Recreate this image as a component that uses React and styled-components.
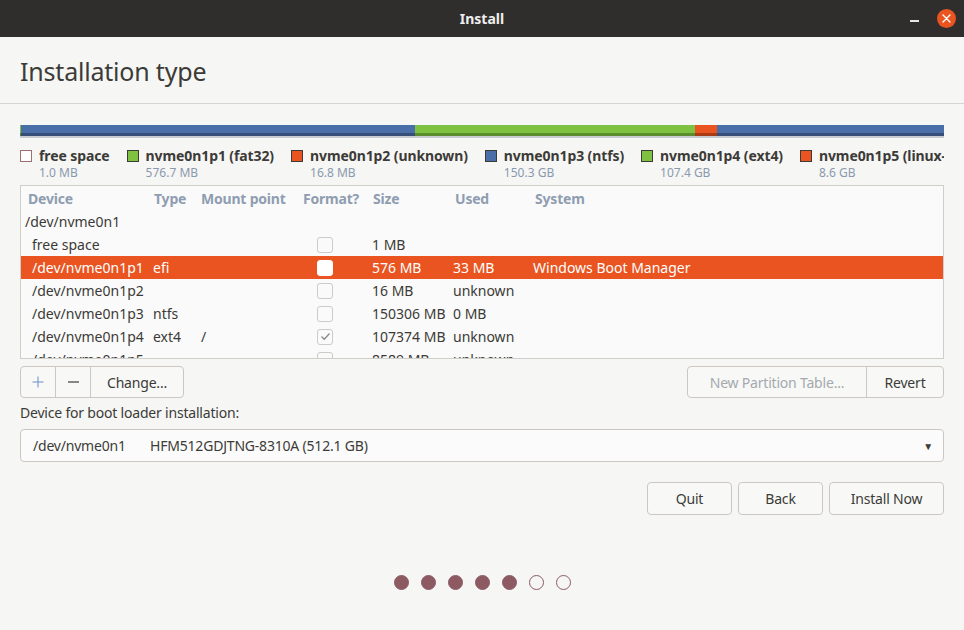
import React from "react";
import styled, { createGlobalStyle } from "styled-components";

const GlobalStyle = createGlobalStyle`
  html, body { margin: 0; padding: 0; }
  body {
    background: #f6f6f5;
    font-family: "Noto Sans", "Open Sans", sans-serif;
    color: #3c3b37;
  }
  * { box-sizing: border-box; }
`;

const Window = styled.div`
  width: 964px;
  height: 630px;
  display: flex;
  flex-direction: column;
  background: #f6f6f5;
  overflow: hidden;
`;

const TitleBar = styled.div`
  height: 37px;
  flex: none;
  background: #302e2c;
  display: grid;
  grid-template-columns: 1fr auto 1fr;
  align-items: center;
`;

const TitleText = styled.div`
  grid-column: 2;
  color: #efefef;
  font-weight: 700;
  font-size: 14px;
`;

const Controls = styled.div`
  grid-column: 3;
  justify-self: end;
  display: flex;
  align-items: center;
  gap: 18px;
  padding-right: 8px;
`;

const MinBtn = styled.div`
  width: 9px;
  height: 2px;
  background: #e6e6e6;
  margin-top: 4px;
`;

const CloseBtn = styled.div`
  width: 19px;
  height: 19px;
  border-radius: 50%;
  background: #e95420;
  display: flex;
  align-items: center;
  justify-content: center;
`;

const Header = styled.div`
  flex: none;
  height: 67px;
  border-bottom: 1px solid #d6d5d3;
  padding: 18px 20px 0;
`;

const Title = styled.h1`
  margin: 0;
  font-size: 25px;
  font-weight: 400;
  line-height: 32px;
  color: #3c3b37;
  letter-spacing: -0.2px;
`;

const Body = styled.div`
  padding: 21px 20px 0;
  display: flex;
  flex-direction: column;
`;

const Bar = styled.div`
  height: 13px;
  display: flex;
  border-bottom: 2px solid #c9ccd0;
`;

const Seg = styled.div`
  height: 100%;
  background: ${(p) => p.$c};
  box-shadow: inset 0 -3px 0 rgba(0, 0, 0, 0.28);
`;

const Legend = styled.div`
  margin-top: 9px;
  display: flex;
  gap: 17px;
  overflow: hidden;
  white-space: nowrap;
  height: 36px;
`;

const LegendItem = styled.div`
  display: flex;
  gap: 7px;
  flex: none;
`;

const Swatch = styled.div`
  width: 12px;
  height: 12px;
  margin-top: 3px;
  background: ${(p) => p.$c};
  border: 1px solid ${(p) => p.$b};
`;

const LegendText = styled.div`
  display: flex;
  flex-direction: column;
`;

const LegendName = styled.span`
  font-size: 14px;
  font-weight: 700;
  line-height: 18px;
  color: #3c3b37;
  letter-spacing: -0.1px;
`;

const LegendSize = styled.span`
  font-size: 12px;
  line-height: 15px;
  color: #8a99ad;
`;

const Table = styled.div`
  margin-top: 2px;
  height: 174px;
  border: 1px solid #cfceca;
  background: #fafafa;
  overflow: hidden;
`;

const cols = "126px 47px 102px 70px 82px 80px 1fr";

const HeadRow = styled.div`
  display: grid;
  grid-template-columns: ${cols};
  height: 24px;
  align-items: center;
  padding-left: 7px;
  font-size: 14px;
  font-weight: 700;
  color: #8f9db1;
  letter-spacing: -0.2px;
`;

const Row = styled.div`
  display: grid;
  grid-template-columns: ${cols};
  height: 23px;
  align-items: center;
  padding-left: 7px;
  font-size: 14px;
  background: ${(p) => (p.$sel ? "#e95420" : "transparent")};
  color: ${(p) => (p.$sel ? "#ffffff" : "#3c3b37")};
  white-space: nowrap;
`;

const Cell = styled.div`
  padding-left: ${(p) => p.$pl || 0}px;
  margin-left: ${(p) => p.$ml || 0}px;
`;

const CheckCell = styled.div`
  display: flex;
  padding-left: 14px;
`;

const Check = styled.div`
  width: 16px;
  height: 16px;
  border-radius: 3px;
  border: 1px solid ${(p) => (p.$sel ? "#ffffff" : "#cdcbc8")};
  background: ${(p) => (p.$sel ? "#ffffff" : "#fafafa")};
  display: flex;
  align-items: center;
  justify-content: center;
`;

const ButtonRow = styled.div`
  margin-top: 7px;
  display: flex;
  justify-content: space-between;
`;

const Group = styled.div`
  display: flex;
  border: 1px solid #cdc7c2;
  border-radius: 4px;
  background: #f8f8f7;
  height: 32px;
`;

const GroupBtn = styled.div`
  width: ${(p) => p.$w}px;
  display: flex;
  align-items: center;
  justify-content: center;
  font-size: 14px;
  color: ${(p) => (p.$dis ? "#a5a9ae" : "#3c3b37")};
  border-left: ${(p) => (p.$first ? "none" : "1px solid #cdc7c2")};
  letter-spacing: -0.2px;
`;

const Label = styled.div`
  margin-top: 6px;
  font-size: 14px;
  line-height: 18px;
  color: #3c3b37;
  letter-spacing: -0.2px;
`;

const Combo = styled.div`
  margin-top: 7px;
  height: 33px;
  border: 1px solid #cdc7c2;
  border-radius: 4px;
  background: #fbfbfb;
  display: flex;
  align-items: center;
  padding: 0 10px 0 12px;
  font-size: 14px;
  letter-spacing: -0.2px;
`;

const ComboDev = styled.span`
  width: 117px;
  flex: none;
`;

const ComboName = styled.span`
  flex: 1;
`;

const Arrow = styled.span`
  font-size: 10px;
  color: #3c3b37;
`;

const Actions = styled.div`
  margin-top: 20px;
  display: flex;
  justify-content: flex-end;
  gap: 6px;
`;

const ActionBtn = styled.div`
  width: ${(p) => p.$w}px;
  height: 33px;
  border: 1px solid #cdc7c2;
  border-radius: 4px;
  background: #f8f8f7;
  display: flex;
  align-items: center;
  justify-content: center;
  font-size: 14px;
  color: #3c3b37;
  letter-spacing: -0.2px;
`;

const Dots = styled.div`
  margin-top: 60px;
  display: flex;
  justify-content: center;
  gap: 12px;
  padding-left: 1px;
`;

const Dot = styled.div`
  width: 15px;
  height: 15px;
  border-radius: 50%;
  background: ${(p) => (p.$on ? "#8c5a60" : "transparent")};
  border: 1.5px solid #8c5a6a;
`;

const legend = [
  { name: "free space", size: "1.0 MB", c: "#ffffff", b: "#a07070" },
  { name: "nvme0n1p1 (fat32)", size: "576.7 MB", c: "#7fc241", b: "#3c3b37" },
  { name: "nvme0n1p2 (unknown)", size: "16.8 MB", c: "#e95420", b: "#3c3b37" },
  { name: "nvme0n1p3 (ntfs)", size: "150.3 GB", c: "#4a6ea8", b: "#3c3b37" },
  { name: "nvme0n1p4 (ext4)", size: "107.4 GB", c: "#7fc241", b: "#3c3b37" },
  { name: "nvme0n1p5 (linux-swap)", size: "8.6 GB", c: "#e95420", b: "#3c3b37" },
];

const rows = [
  { dev: "free space", type: "", mount: "", check: false, size: "1 MB", used: "", sys: "" },
  { dev: "/dev/nvme0n1p1", type: "efi", mount: "", check: false, size: "576 MB", used: "33 MB", sys: "Windows Boot Manager", sel: true },
  { dev: "/dev/nvme0n1p2", type: "", mount: "", check: false, size: "16 MB", used: "unknown", sys: "" },
  { dev: "/dev/nvme0n1p3", type: "ntfs", mount: "", check: false, size: "150306 MB", used: "0 MB", sys: "" },
  { dev: "/dev/nvme0n1p4", type: "ext4", mount: "/", check: true, size: "107374 MB", used: "unknown", sys: "" },
  { dev: "/dev/nvme0n1p5", type: "", mount: "", check: false, size: "8589 MB", used: "unknown", sys: "" },
];

export default function App() {
  return (
    <>
      <GlobalStyle />
      <Window>
        <TitleBar>
          <TitleText>Install</TitleText>
          <Controls>
            <MinBtn />
            <CloseBtn>
              <svg width="9" height="9" viewBox="0 0 9 9">
                <path d="M1 1L8 8M8 1L1 8" stroke="#fff" strokeWidth="1.4" strokeLinecap="round" />
              </svg>
            </CloseBtn>
          </Controls>
        </TitleBar>
        <Header>
          <Title>Installation type</Title>
        </Header>
        <Body>
          <Bar>
            <Seg $c="#7fc241" style={{ width: 1 }} />
            <Seg $c="#4a6ea8" style={{ width: 394 }} />
            <Seg $c="#7fc241" style={{ width: 280 }} />
            <Seg $c="#e95420" style={{ width: 22 }} />
            <Seg $c="#4a6ea8" style={{ flex: 1 }} />
          </Bar>
          <Legend>
            {legend.map((l) => (
              <LegendItem key={l.name}>
                <Swatch $c={l.c} $b={l.b} />
                <LegendText>
                  <LegendName>{l.name}</LegendName>
                  <LegendSize>{l.size}</LegendSize>
                </LegendText>
              </LegendItem>
            ))}
          </Legend>
          <Table>
            <HeadRow>
              <Cell>Device</Cell>
              <Cell>Type</Cell>
              <Cell>Mount point</Cell>
              <Cell>Format?</Cell>
              <Cell>Size</Cell>
              <Cell>Used</Cell>
              <Cell>System</Cell>
            </HeadRow>
            <Row>
              <Cell $ml={-3}>/dev/nvme0n1</Cell>
            </Row>
            {rows.map((r) => (
              <Row key={r.dev} $sel={r.sel}>
                <Cell $pl={4}>{r.dev}</Cell>
                <Cell $ml={-1}>{r.type}</Cell>
                <Cell>{r.mount}</Cell>
                <CheckCell>
                  <Check $sel={r.sel}>
                    {r.check && (
                      <svg width="11" height="9" viewBox="0 0 11 9">
                        <path d="M1.5 4.5L4.2 7.2L9.5 1.5" fill="none" stroke="#8a8a8a" strokeWidth="1.3" />
                      </svg>
                    )}
                  </Check>
                </CheckCell>
                <Cell $ml={-1}>{r.size}</Cell>
                <Cell $ml={-2}>{r.used}</Cell>
                <Cell $ml={-2}>{r.sys}</Cell>
              </Row>
            ))}
          </Table>
          <ButtonRow>
            <Group>
              <GroupBtn $w={34} $first>
                <svg width="12" height="12" viewBox="0 0 12 12">
                  <path d="M6 0.5V11.5M0.5 6H11.5" stroke="#6d8fc7" strokeWidth="1" />
                </svg>
              </GroupBtn>
              <GroupBtn $w={35}>
                <svg width="11" height="2" viewBox="0 0 11 2">
                  <path d="M0 1H11" stroke="#3c3b37" strokeWidth="1.2" />
                </svg>
              </GroupBtn>
              <GroupBtn $w={93}>Change...</GroupBtn>
            </Group>
            <Group>
              <GroupBtn $w={178} $first $dis>New Partition Table...</GroupBtn>
              <GroupBtn $w={77}>Revert</GroupBtn>
            </Group>
          </ButtonRow>
          <Label>Device for boot loader installation:</Label>
          <Combo>
            <ComboDev>/dev/nvme0n1</ComboDev>
            <ComboName>HFM512GDJTNG-8310A (512.1 GB)</ComboName>
            <Arrow>▼</Arrow>
          </Combo>
          <Actions>
            <ActionBtn $w={85}>Quit</ActionBtn>
            <ActionBtn $w={85}>Back</ActionBtn>
            <ActionBtn $w={115}>Install Now</ActionBtn>
          </Actions>
          <Dots>
            {[1, 1, 1, 1, 1, 0, 0].map((on, i) => (
              <Dot key={i} $on={!!on} />
            ))}
          </Dots>
        </Body>
      </Window>
    </>
  );
}
